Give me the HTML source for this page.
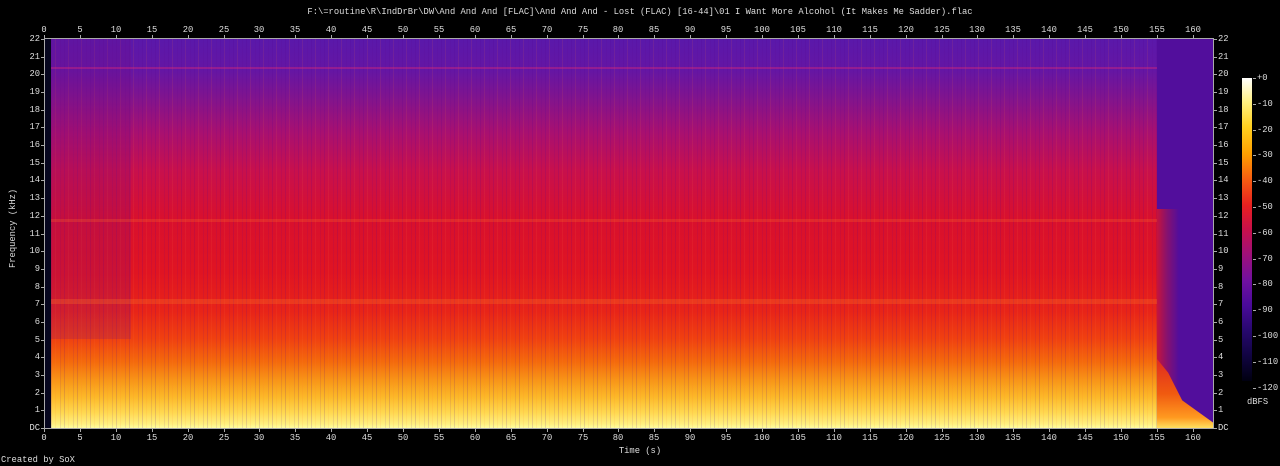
<!DOCTYPE html>
<html><head><meta charset="utf-8"><style>
body{margin:0;background:#000;width:1280px;height:466px;overflow:hidden;position:relative;font-family:"Liberation Mono",monospace;font-size:8.8px;color:#ddd}
.a{position:absolute}
#plot{left:45px;top:39px;width:1168px;height:389px;overflow:hidden;background:#0a0a30}
.t{position:absolute;white-space:nowrap;line-height:10px}
.tk{position:absolute;background:#aaa}
</style></head><body>
<div class="t" style="left:0;width:1280px;text-align:center;top:7px">F:\=routine\R\IndDrBr\DW\And And And [FLAC]\And And And - Lost (FLAC) [16-44]\01 I Want More Alcohol (It Makes Me Sadder).flac</div>
<div class="a" id="plot">
 <div class="a" style="left:6px;top:0;width:1106px;height:389px;background:linear-gradient(to bottom,#5a18aa 0%,#6416a4 8%,#80148e 15%,#a81070 24%,#c8104c 34%,#d8102e 46%,#e01422 60%,#e82418 70%,#f04010 77%,#f46a0c 83%,#f89818 88%,#fcb828 92%,#ffd850 96%,#fff080 99%,#ffffa0 100%)"></div>
 <div class="a" style="left:6px;top:0;width:1106px;height:389px;background:repeating-linear-gradient(to right,rgba(80,0,140,.15) 0 1px,transparent 1px 4px,rgba(255,120,60,.1) 4px 5px,transparent 5px 9px,rgba(90,0,140,.1) 9px 10px,transparent 10px 13px);"></div>
 <div class="a" style="left:6px;top:0;width:80px;height:300px;background:rgba(120,10,130,.2)"></div>
 <div class="a" style="left:6px;top:180px;width:1106px;height:3px;background:rgba(255,110,40,.25)"></div>
 <div class="a" style="left:6px;top:260px;width:1106px;height:5px;background:rgba(255,130,40,.25)"></div>
 <div class="a" style="left:6px;top:28px;width:1106px;height:2px;background:rgba(220,40,120,.4)"></div>
 <div class="a" style="left:1112px;top:0;width:56px;height:389px;background:#520e9c"></div>
 <div class="a" style="left:1112px;top:170px;width:56px;height:219px;background:linear-gradient(to right,rgba(210,20,50,.9) 0,rgba(170,20,80,.6) 10px,rgba(82,14,156,0) 22px)"></div>
 <div class="a" style="left:1112px;top:320px;width:56px;height:69px;clip-path:polygon(0 0,20% 20%,45% 60%,100% 92%,100% 100%,0 100%);background:linear-gradient(to bottom,#e02a20 0%,#f05a10 50%,#ff9a20 85%,#ffe060 100%)"></div>
 <div class="a" style="left:0;top:0;width:6px;height:389px;background:#06061e"></div>
</div>
<div class="a" style="left:44px;top:38px;width:1px;height:391px;background:#aaa"></div>
<div class="a" style="left:1213px;top:38px;width:1px;height:391px;background:#aaa"></div>
<div class="a" style="left:44px;top:38px;width:1170px;height:1px;background:#aaa"></div>
<div class="a" style="left:44px;top:428px;width:1170px;height:1px;background:#aaa"></div>
<div class="a" style="left:1242px;top:78px;width:10px;height:303px;background:linear-gradient(to bottom,#ffffff 0%,#fff080 8%,#ffd020 16%,#ffa000 25%,#f86010 33%,#e82020 42%,#c8104a 50%,#a01078 58%,#7010a0 67%,#4a0a9a 75%,#280870 83%,#100440 92%,#000010 100%)"></div>
<div class="t" style="left:8px;top:268px;transform:rotate(-90deg);transform-origin:0 0">Frequency (kHz)</div>
<div class="t" style="left:0;width:1280px;text-align:center;top:446px">Time (s)</div>
<div class="t" style="left:1px;top:455px">Created by SoX</div>
<div class="t" style="left:1247px;top:397px">dBFS</div>
<div id="g"></div>
<script>
var g=document.getElementById('g'),h='';
for(var i=0;i<=32;i++){var x=44+i*35.9;var s=''+i*5;
h+='<div class="tk" style="left:'+Math.round(x)+'px;top:35px;width:1px;height:3px"></div><div class="tk" style="left:'+Math.round(x)+'px;top:429px;width:1px;height:3px"></div>';
h+='<div class="t" style="left:'+Math.round(x-30)+'px;width:60px;text-align:center;top:25px">'+s+'</div><div class="t" style="left:'+Math.round(x-30)+'px;width:60px;text-align:center;top:433px">'+s+'</div>';}
for(var k=0;k<=22;k++){var y=428-k*17.68;var s=k?''+k:'DC';
h+='<div class="tk" style="left:41px;top:'+Math.round(y)+'px;width:3px;height:1px"></div><div class="tk" style="left:1214px;top:'+Math.round(y)+'px;width:3px;height:1px"></div>';
h+='<div class="t" style="left:0;width:40px;text-align:right;top:'+Math.round(y-5)+'px">'+s+'</div><div class="t" style="left:1218px;top:'+Math.round(y-5)+'px">'+s+'</div>';}
for(var j=0;j<=12;j++){var y=78+j*25.8;var s=j?'-'+j*10:'+0';
h+='<div class="tk" style="left:1253px;top:'+Math.round(y)+'px;width:3px;height:1px"></div><div class="t" style="left:1257px;top:'+Math.round(y-5)+'px">'+s+'</div>';}
g.innerHTML=h;
</script>
</body></html>
